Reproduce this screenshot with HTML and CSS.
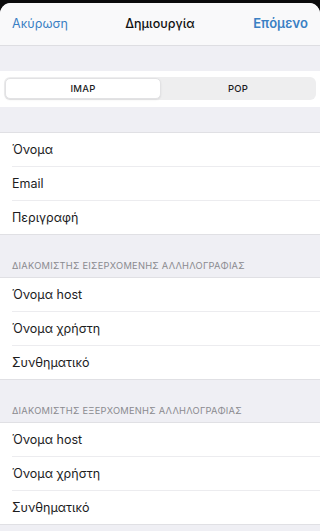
FILE: index.html
```html
<!DOCTYPE html>
<html lang="el">
<head>
<meta charset="utf-8">
<title>Δημιουργία</title>
<link rel="stylesheet" href="styles.css">
</head>
<body>
<div class="sheet">
  <header class="nav">
    <span class="nav-btn">Ακύρωση</span>
    <span class="nav-title">Δημιουργία</span>
    <span class="nav-btn nav-next">Επόμενο</span>
  </header>

  <div class="seg-cell">
    <div class="segmented">
      <div class="seg seg-active">IMAP</div>
      <div class="seg">POP</div>
    </div>
  </div>

  <ul class="group group-first">
    <li class="row">Όνομα</li>
    <li class="row">Email</li>
    <li class="row">Περιγραφή</li>
  </ul>

  <div class="section-header">ΔΙΑΚΟΜΙΣΤΗΣ ΕΙΣΕΡΧΟΜΕΝΗΣ ΑΛΛΗΛΟΓΡΑΦΙΑΣ</div>
  <ul class="group">
    <li class="row">Όνομα host</li>
    <li class="row">Όνομα χρήστη</li>
    <li class="row">Συνθηματικό</li>
  </ul>

  <div class="section-header">ΔΙΑΚΟΜΙΣΤΗΣ ΕΞΕΡΧΟΜΕΝΗΣ ΑΛΛΗΛΟΓΡΑΦΙΑΣ</div>
  <ul class="group">
    <li class="row">Όνομα host</li>
    <li class="row">Όνομα χρήστη</li>
    <li class="row">Συνθηματικό</li>
  </ul>
</div>
</body>
</html>
```

FILE: styles.css
```css
* { box-sizing: border-box; }

html, body {
  margin: 0;
  padding: 0;
  background: #0b0b0c;
  height: 100%;
  overflow: hidden;
}

body {
  font-family: "Inter", "Liberation Sans", "DejaVu Sans", sans-serif;
  color: #1c1c1e;
}

.sheet {
  margin-top: 3px;
  height: 528px;
  background: #efeff4;
  border-radius: 11px 11px 0 0;
  overflow: hidden;
}

.nav {
  height: 43px;
  background: #f9f9fa;
  border-bottom: 1px solid #dedee2;
  display: flex;
  align-items: center;
  justify-content: space-between;
  padding: 0 12px 2px 12px;
  position: relative;
}

.nav-btn {
  color: #3a80c4;
  font-size: 12.5px;
  letter-spacing: 0.05px;
}

.nav-next {
  font-weight: 600;
  font-size: 13px;
}

.nav-title {
  position: absolute;
  left: 0;
  right: 0;
  text-align: center;
  font-size: 12.5px;
  font-weight: 500;
  color: #111;
  pointer-events: none;
  top: 13px;
}

.seg-cell {
  margin-top: 25px;
  background: #ffffff;
  height: 36px;
  padding: 6px 4px 0 4px;
}

.segmented {
  display: flex;
  height: 23px;
  background: #eeeeef;
  border-radius: 6px;
  padding: 1px;
}

.seg {
  flex: 1;
  display: flex;
  align-items: center;
  justify-content: center;
  font-size: 9.5px;
  font-weight: 500;
  letter-spacing: 0.2px;
  color: #1c1c1e;
  border-radius: 5px;
}

.seg-active {
  background: #ffffff;
  border: 1px solid #e2e2e4;
  box-shadow: 0 1px 2px rgba(0, 0, 0, 0.08);
}

.group {
  list-style: none;
  margin: 0;
  padding: 0;
  background: #ffffff;
  border-top: 1px solid #e0e0e4;
  border-bottom: 1px solid #e0e0e4;
}

.group-first {
  margin-top: 25px;
}

.row {
  height: 33px;
  display: flex;
  align-items: center;
  padding-left: 12px;
  font-size: 12.5px;
  color: #1c1c1e;
  position: relative;
}

.row + .row {
  height: 34px;
  border-top: 1px solid transparent;
}

.row + .row::before {
  content: "";
  position: absolute;
  top: -1px;
  left: 12px;
  right: 0;
  height: 1px;
  background: #ececef;
}

.section-header {
  padding: 25px 12px 5px 12px;
  font-size: 9.3px;
  letter-spacing: 0.25px;
  color: #8a8a8f;
  font-weight: 400;
  line-height: 12px;
}
```
